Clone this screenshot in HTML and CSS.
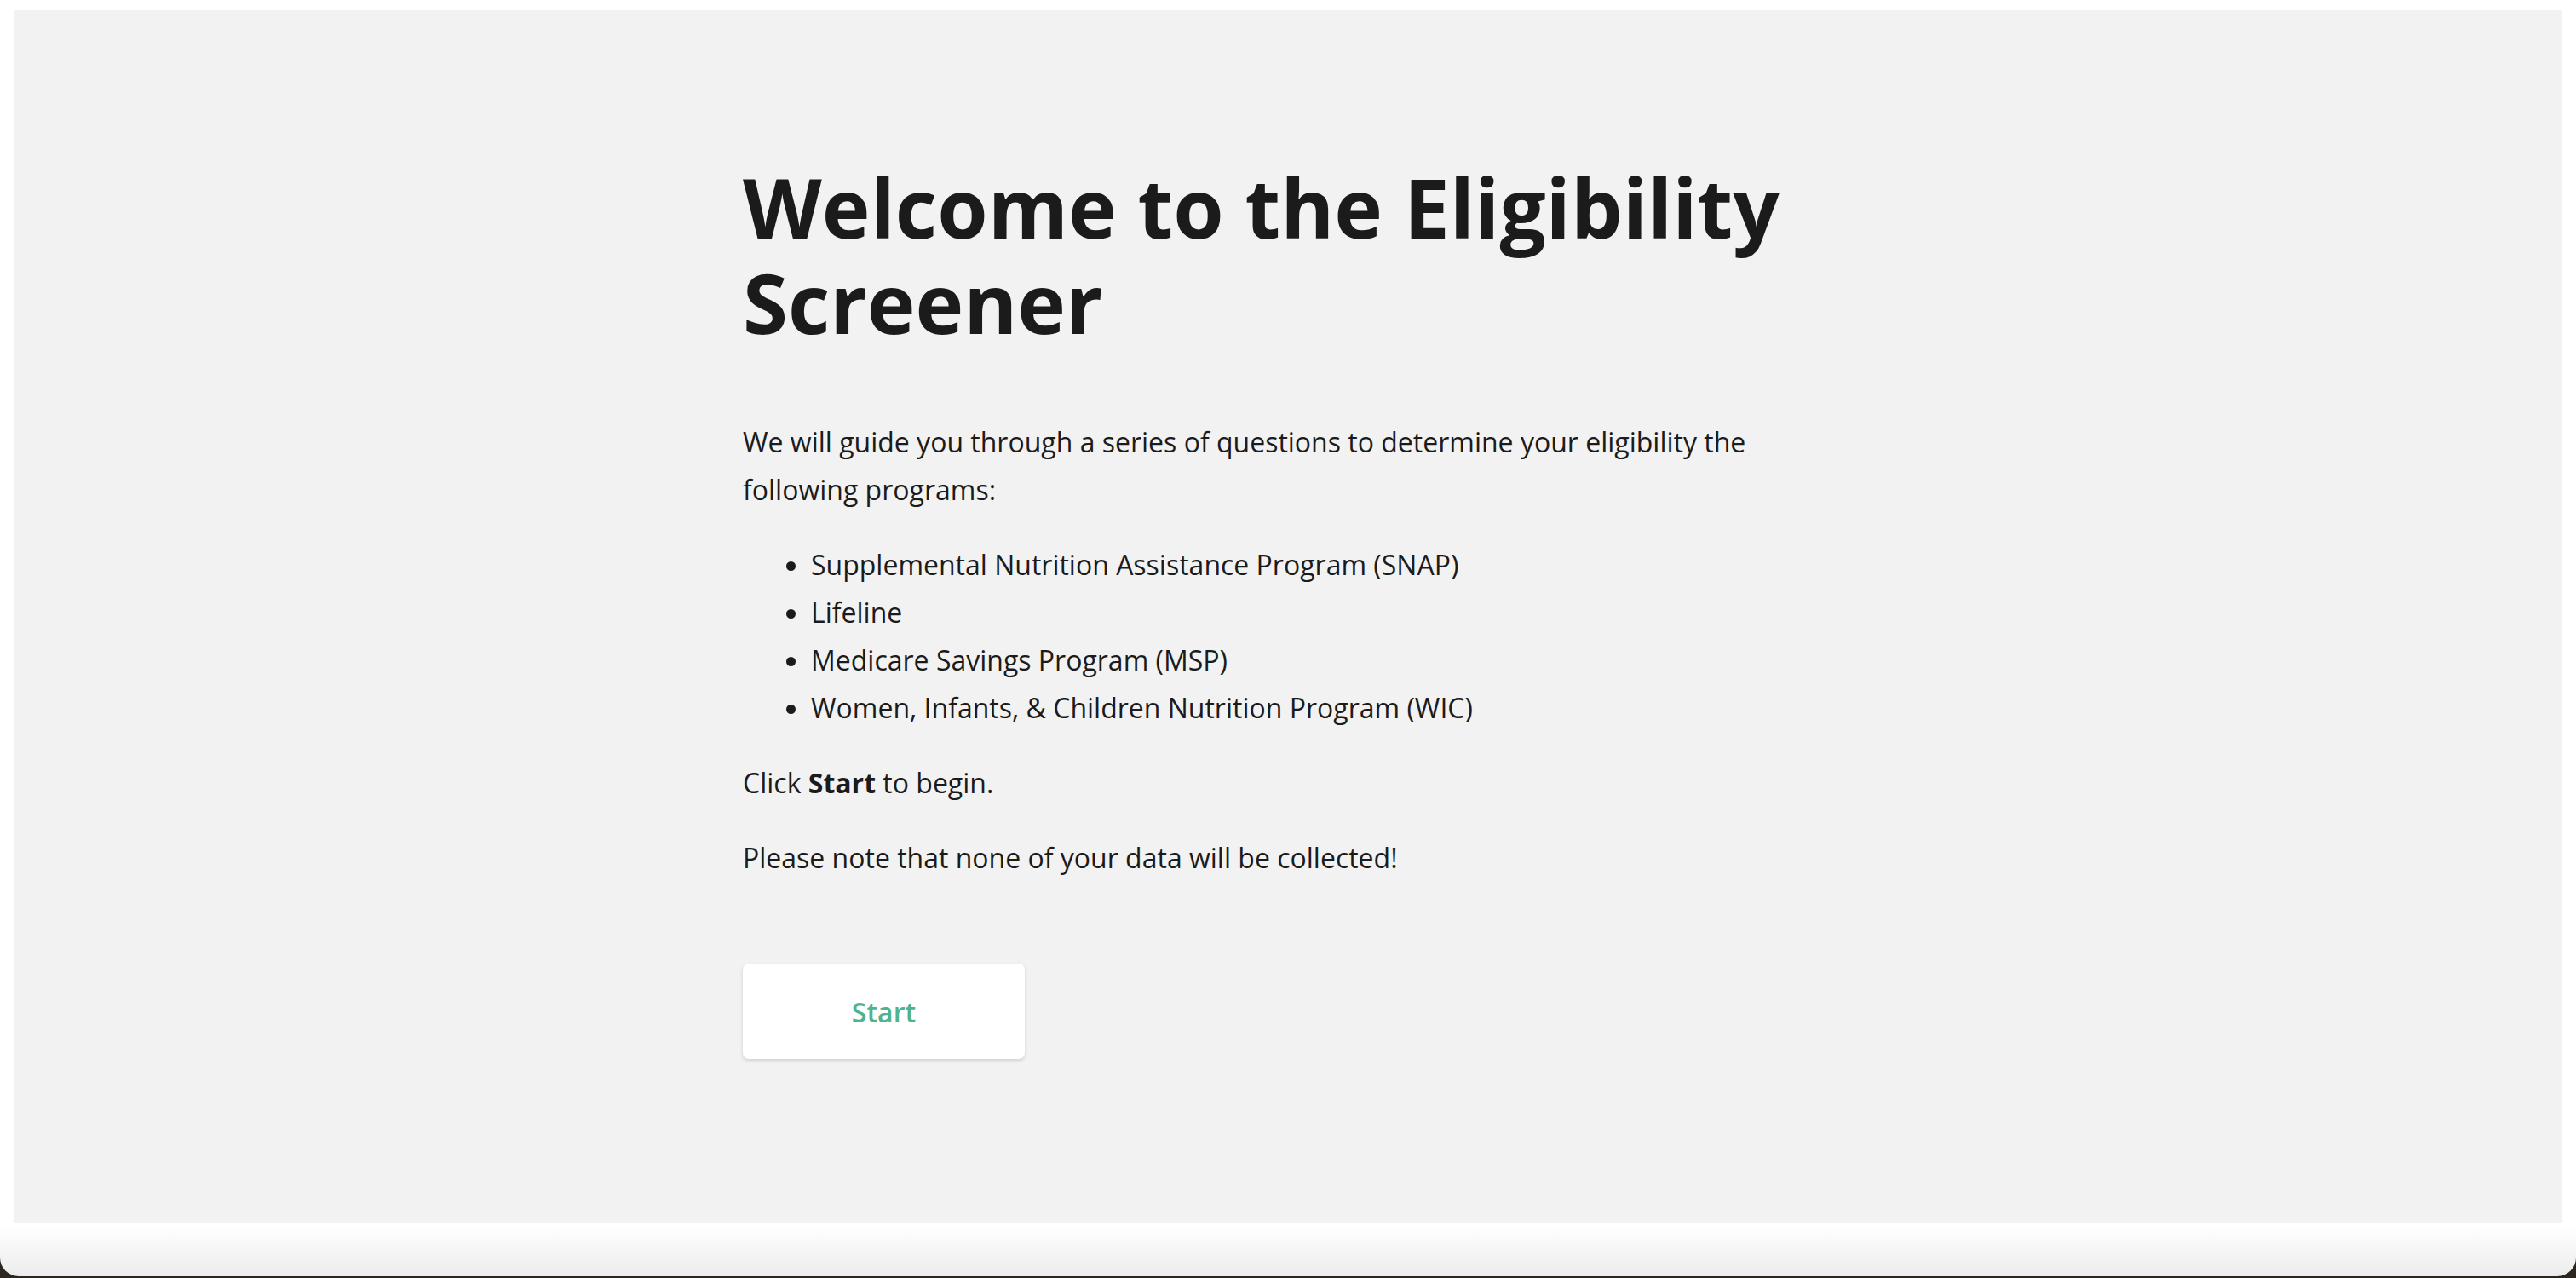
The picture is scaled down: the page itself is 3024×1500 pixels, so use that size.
FILE: index.html
```html
<!DOCTYPE html>
<html lang="en">
<head>
<meta charset="utf-8">
<title>Eligibility Screener</title>
<link rel="stylesheet" href="styles.css">
</head>
<body>
<div class="window">
  <main class="page">
    <section class="content">
      <h1 class="title">Welcome to the Eligibility Screener</h1>
      <p class="text">We will guide you through a series of questions to determine your eligibility the following programs:</p>
      <ul class="programs">
        <li>Supplemental Nutrition Assistance Program (SNAP)</li>
        <li>Lifeline</li>
        <li>Medicare Savings Program (MSP)</li>
        <li>Women, Infants, &amp; Children Nutrition Program (WIC)</li>
      </ul>
      <p class="text">Click <strong>Start</strong> to begin.</p>
      <p class="text">Please note that none of your data will be collected!</p>
      <div class="actions">
        <button class="start-btn" type="button">Start</button>
      </div>
    </section>
  </main>
</div>
</body>
</html>
```
FILE: styles.css
```css
html {
  background: #2b2620;
}
body {
  margin: 0;
  font-family: "Open Sans", "Noto Sans", sans-serif;
  color: #1b1b1b;
}
.window {
  height: 1498px;
  box-sizing: border-box;
  padding: 12px 16px 0;
  background: linear-gradient(to bottom, #ffffff 0, #ffffff 1440px, #ececec 1498px);
  border-radius: 0 0 22px 22px;
  overflow: hidden;
}
.page {
  height: 1423px;
  background: #f2f2f2;
  display: flex;
  justify-content: center;
  box-sizing: border-box;
  padding-top: 175px;
}
.content {
  width: 1280px;
}
.title {
  margin: 0 0 80px;
  font-size: 96px;
  line-height: 112px;
  font-weight: 700;
  color: #1b1b1b;
}
.text {
  margin: 0 0 32px;
  font-size: 32px;
  line-height: 56px;
}
.text strong {
  font-weight: 700;
}
.programs {
  margin: 0 0 32px;
  padding-left: 80px;
  font-size: 32px;
  line-height: 56px;
}
.actions {
  margin-top: 96px;
}
.start-btn {
  width: 331px;
  height: 112px;
  border: none;
  border-radius: 7px;
  background: #ffffff;
  box-shadow: 0 2px 4px rgba(0, 0, 0, 0.14);
  font-family: "Open Sans", "Noto Sans", sans-serif;
  font-size: 32px;
  font-weight: 600;
  color: #4fb38f;
  cursor: pointer;
}
```
